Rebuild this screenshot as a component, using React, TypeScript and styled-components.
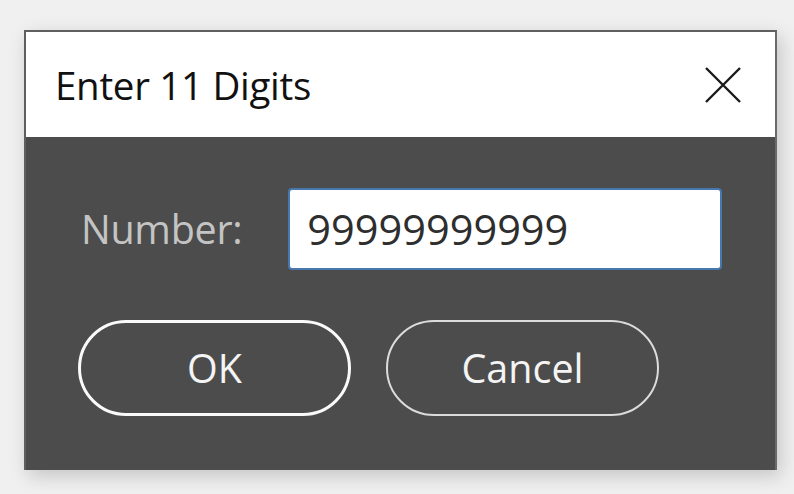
import { ReactElement } from 'react'
import styled, { createGlobalStyle } from 'styled-components'

const GlobalStyle = createGlobalStyle`
  html, body {
    margin: 0;
    padding: 0;
    background: #f0f0f0;
  }
  body {
    font-family: 'Open Sans', 'Noto Sans', sans-serif;
  }
`

const CloseIcon = (): ReactElement => (
  <svg width="36" height="36" viewBox="0 0 36 36">
    <path d="M1 1 L35 35 M35 1 L1 35" stroke="#1a1a1a" strokeWidth="2.4" fill="none" />
  </svg>
)

const App = (): ReactElement => (
  <>
    <GlobalStyle />
    <Page>
      <Dialog>
        <TitleBar>
          <Title>Enter 11 Digits</Title>
          <CloseButton aria-label="Close">
            <CloseIcon />
          </CloseButton>
        </TitleBar>
        <Body>
          <FieldRow>
            <Label>Number:</Label>
            <NumberInput defaultValue="99999999999" />
          </FieldRow>
          <ButtonRow>
            <DialogButton $focused>OK</DialogButton>
            <DialogButton>Cancel</DialogButton>
          </ButtonRow>
        </Body>
      </Dialog>
    </Page>
  </>
)

export default App

const Page = styled.div`
  width: 794px;
  height: 494px;
  padding: 30px 0 0 24px;
  box-sizing: border-box;
  overflow: hidden;
`

const Dialog = styled.div`
  width: 753px;
  height: 440px;
  box-sizing: border-box;
  border: 2px solid #5f5f5f;
  border-bottom: none;
  border-right-color: #6a6a6a;
  display: flex;
  flex-direction: column;
  box-shadow: 4px 6px 18px rgba(0, 0, 0, 0.18);
`

const TitleBar = styled.div`
  height: 105px;
  background: #ffffff;
  display: flex;
  align-items: center;
  justify-content: space-between;
  padding: 0 34px 0 29px;
  flex-shrink: 0;
`

const Title = styled.span`
  font-size: 38.5px;
  color: #111111;
  letter-spacing: -0.3px;
  margin-top: 0;
`

const CloseButton = styled.button`
  border: none;
  background: none;
  padding: 0;
  display: flex;
  cursor: pointer;
`

const Body = styled.div`
  flex: 1;
  background: #4c4c4c;
  padding: 51px 0 0 55px;
  display: flex;
  flex-direction: column;
`

const FieldRow = styled.div`
  display: flex;
  align-items: center;
  gap: 46px;
`

const Label = styled.label`
  font-size: 39.5px;
  color: #c4c4c4;
  letter-spacing: -0.3px;
`

const NumberInput = styled.input`
  width: 434px;
  height: 82px;
  box-sizing: border-box;
  border: 2px solid #4677ad;
  border-radius: 4px;
  background: #ffffff;
  padding: 0 0 0 17px;
  font-family: 'Open Sans', 'Noto Sans', sans-serif;
  font-size: 41.5px;
  color: #2e2e2e;
  outline: none;
`

const ButtonRow = styled.div`
  display: flex;
  gap: 35px;
  margin-top: 50px;
  margin-left: -3px;
`

const DialogButton = styled.button<{ $focused?: boolean }>`
  width: 273px;
  height: 96px;
  box-sizing: border-box;
  border-radius: 48px;
  border: ${({ $focused }) => ($focused ? '3px solid #fafafa' : '2px solid #dcdcdc')};
  background: transparent;
  color: #f4f4f4;
  font-family: 'Open Sans', 'Noto Sans', sans-serif;
  font-size: 39.5px;
  cursor: pointer;
`
